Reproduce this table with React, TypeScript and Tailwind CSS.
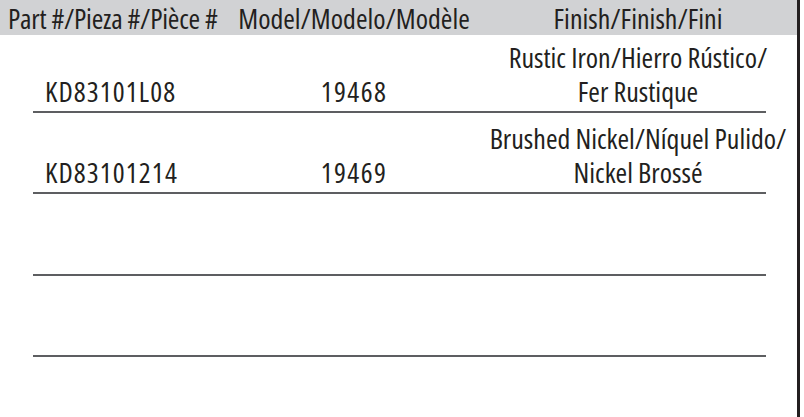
const rows = [
  { part: "KD83101L08", model: "19468", finish: ["Rustic Iron/Hierro Rústico/", "Fer Rustique"], h: "h-[76px]" },
  { part: "KD83101214", model: "19469", finish: ["Brushed Nickel/Níquel Pulido/", "Nickel Brossé"], h: "h-[79px]" },
  { part: "", model: "", finish: ["", ""], h: "h-[80px]" },
  { part: "", model: "", finish: ["", ""], h: "h-[79px]" },
];

export default function App() {
  return (
    <div className="flex w-[804px] h-[417px] bg-white text-[#231f20] font-['Open_Sans',sans-serif] font-stretch-[80%] overflow-hidden">
      <div className="w-[797px] flex flex-col">
        <div className="h-[35px] bg-[#d1d2d4] grid grid-cols-[237px_234px_1fr] items-center text-[28px] font-stretch-[81%] leading-[36px] whitespace-nowrap">
          <div className="pl-[8px] tracking-[-0.2px]">Part #/Pieza #/Pièce #</div>
          <div className="text-center">Model/Modelo/Modèle</div>
          <div className="text-center pl-[8px]">Finish/Finish/Fini</div>
        </div>
        <div className="pl-[33px]">
          {rows.map((r, i) => (
            <div key={i}>
              <div className={`${r.h} grid grid-cols-[204px_234px_326px] items-end pb-[3px] text-[28px] leading-[34px] whitespace-nowrap`}>
                <div className="pl-[12px] tracking-[1.1px]">{r.part}</div>
                <div className="text-center tracking-[1.4px]">{r.model}</div>
                <div className="pl-[8px] flex flex-col items-center">
                  <div>{r.finish[0]}</div>
                  <div>{r.finish[1]}</div>
                </div>
              </div>
              <div className="w-[733px] h-[2px] bg-[#5d5e61]" />
            </div>
          ))}
        </div>
      </div>
      <div className="w-[3px] h-full bg-[#231f20]" />
      <div className="flex-1" />
    </div>
  );
}
